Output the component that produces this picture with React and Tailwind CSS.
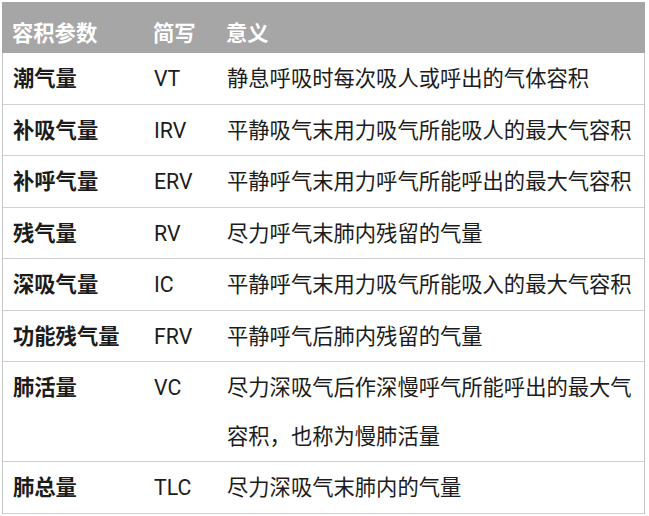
import React from "react";

const rows = [
  ["潮气量", "VT", ["静息呼吸时每次吸人或呼出的气体容积"]],
  ["补吸气量", "IRV", ["平静吸气末用力吸气所能吸人的最大气容积"]],
  ["补呼气量", "ERV", ["平静呼气末用力呼气所能呼出的最大气容积"]],
  ["残气量", "RV", ["尽力呼气末肺内残留的气量"]],
  ["深吸气量", "IC", ["平静呼气末用力吸气所能吸入的最大气容积"]],
  ["功能残气量", "FRV", ["平静呼气后肺内残留的气量"]],
  ["肺活量", "VC", ["尽力深吸气后作深慢呼气所能呼出的最大气", "容积，也称为慢肺活量"]],
  ["肺总量", "TLC", ["尽力深吸气末肺内的气量"]],
];

export default function App() {
  return (
    <div
      className="w-[649px] h-[516px] bg-white pt-[2px] pl-[2px] text-[21.3px] text-[#1c1c1c]"
      style={{ fontFamily: 'Roboto, "Noto Sans CJK SC", sans-serif' }}
    >
      <div className="w-[643px]">
        <div className="grid grid-cols-[143px_73px_1fr] h-[51px] pt-[12px] leading-[40px] bg-[#a6a6a6] text-white font-bold">
          <div className="pl-[10px]">容积参数</div>
          <div className="pl-[8px]">简写</div>
          <div className="pl-[8px]">意义</div>
        </div>
        <div className="border-l border-r border-[#c4c4c4]">
          {rows.map(([a, b, c], i) => (
            <div
              key={i}
              className={
                "grid grid-cols-[143px_73px_1fr] border-b-[1.5px] border-[#d2d2d2] pt-[1px] " +
                (c.length > 1 ? "leading-[49px]" : "leading-[49.5px]")
              }
            >
              <div className="pl-[10px] font-bold">{a}</div>
              <div className="pl-[8px]">{b}</div>
              <div className="pl-[8px]">
                {c.map((l, j) => (
                  <div key={j}>{l}</div>
                ))}
              </div>
            </div>
          ))}
        </div>
      </div>
    </div>
  );
}
